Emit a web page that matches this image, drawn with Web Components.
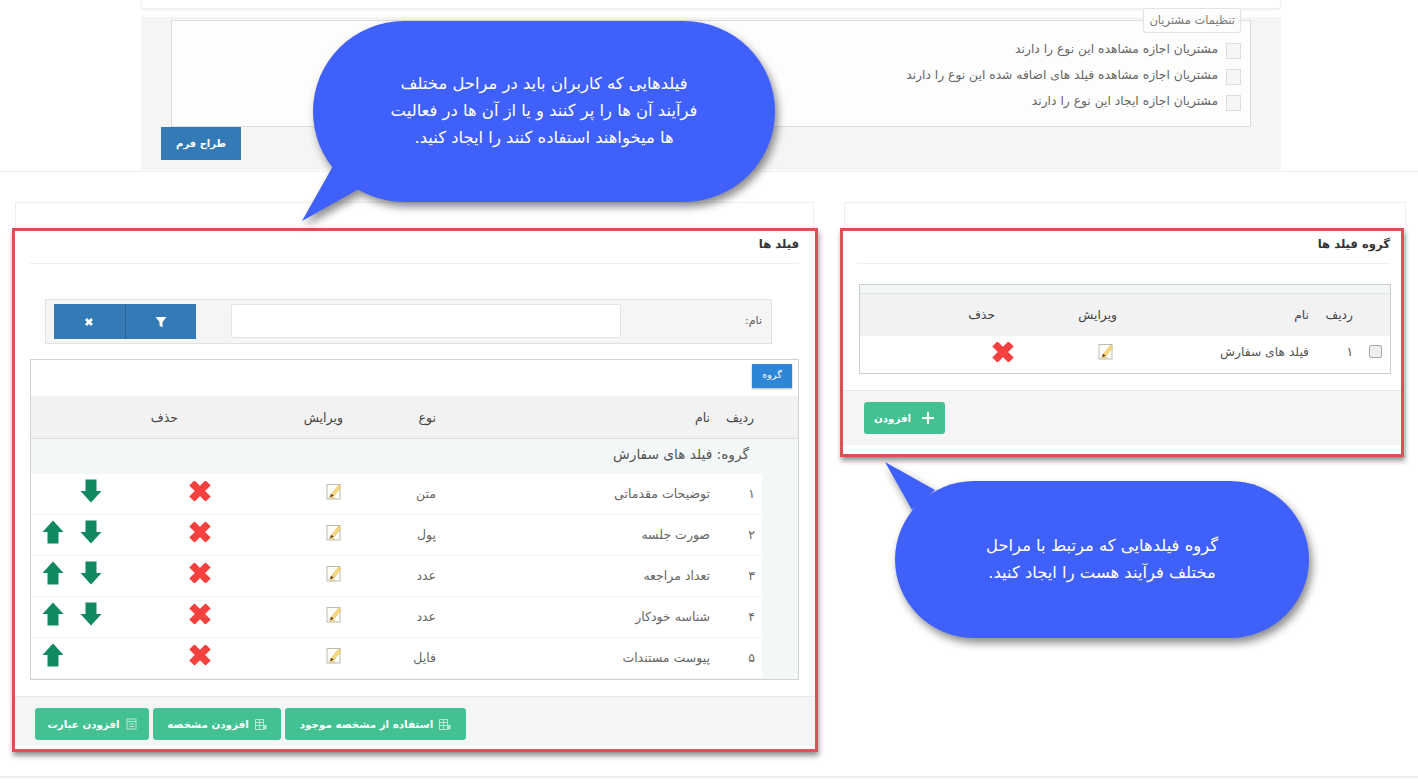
<!DOCTYPE html>
<html lang="fa" dir="rtl">
<head>
<meta charset="utf-8">
<title>فیلد ها</title>
<style>
  html, body { margin: 0; padding: 0; background: #fff; }
  body { font-family: "DejaVu Sans", sans-serif; font-size: 12px; color: #555; }
</style>
</head>
<body>

<app-page></app-page>

<script>
// Iconos dibujados a mano
const ICONS = {
  edit: `<svg width="16" height="17" viewBox="0 0 16 17"><rect x="1" y="1.5" width="13" height="14.5" fill="#fffef8" stroke="#bcbcb0"/><path d="M6 10.5 12.6 2.2 14.8 4 8.2 12.4 5 13.6Z" fill="#f8dc84" stroke="#e2b144" stroke-width=".7"/><path d="M3.8 14.2 5 10.8 8 12.8Z" fill="#6a4a1e"/><path d="M3 14.8h6" stroke="#e0b95c"/></svg>`,
  del: `<svg width="22" height="20" viewBox="0 0 22 20"><path d="M5.5 4.5 16.5 15.5M16.5 4.5 5.5 15.5" stroke="#f5413e" stroke-width="7.4" stroke-linecap="square" fill="none"/></svg>`,
  down: `<svg width="22" height="24" viewBox="0 0 22 24"><path d="M5.5 .5h11V12h5L11 23.5.5 12h5Z" fill="#10895f"/></svg>`,
  up: `<svg width="22" height="24" viewBox="0 0 22 24"><path d="M5.5 23.5h11V12h5L11 .5.5 12h5Z" fill="#10895f"/></svg>`,
  plus: `<svg width="14" height="14" viewBox="0 0 14 14"><path d="M7 1v12M1 7h12" stroke="#fff" stroke-width="2"/></svg>`,
  filter: `<svg width="12" height="12" viewBox="0 0 12 12"><path d="M.5 1h11L7.5 6v5.5L4.5 9.5V6Z" fill="#fff"/></svg>`,
  close: `<svg width="10" height="10" viewBox="0 0 10 10"><path d="M2 2l6 6M8 2 2 8" stroke="#fff" stroke-width="2.8"/></svg>`,
  table: `<svg width="12" height="11" viewBox="0 0 12 11"><path d="M.5.5h8v10h-8ZM.5 3.5h8M.5 6.5h8M4.5.5v10" fill="none" stroke="#b9e8d5"/><path d="M8.5 6h3v4.5h-3Z" fill="#b9e8d5"/></svg>`,
  note: `<svg width="11" height="12" viewBox="0 0 11 12"><path d="M1 1h9v10H1ZM1 3.5h9M3 6h5M3 8.5h5" fill="none" stroke="#b9e8d5"/></svg>`
};

class UiIcon extends HTMLElement {
  connectedCallback() {
    this.attachShadow({ mode: "open" });
    this.shadowRoot.innerHTML = `
      <style>:host { display: inline-flex; line-height: 0; }</style>
      ${ICONS[this.getAttribute("name")] || ""}`;
  }
}
customElements.define("ui-icon", UiIcon);

class SpeechBubble extends HTMLElement {
  connectedCallback() {
    const [x, y, w, h] = this.getAttribute("box").split(",").map(Number);
    const r = Math.round(h / 2);
    this.attachShadow({ mode: "open" });
    this.shadowRoot.innerHTML = `
      <style>
        :host { position: absolute; left: ${x}px; top: ${y}px; width: ${w}px; height: ${h}px;
                display: flex; align-items: center; justify-content: center; z-index: 5;
                color: #fff; font-size: 16.4px; line-height: 27px; text-align: center; white-space: nowrap; }
        svg { position: absolute; inset: 0; overflow: visible; filter: drop-shadow(3px 5px 4px rgba(0,0,0,.45)); }
        div { position: relative; padding-bottom: 2px; }
      </style>
      <svg width="${w}" height="${h}">
        <rect width="${w}" height="${h}" rx="${r}" fill="#4060fb"/>
        <polygon points="${this.getAttribute("tail")}" fill="#4060fb"/>
      </svg>
      <div><slot></slot></div>`;
  }
}
customElements.define("speech-bubble", SpeechBubble);

class GreenButton extends HTMLElement {
  connectedCallback() {
    this.attachShadow({ mode: "open" });
    this.shadowRoot.innerHTML = `
      <style>
        :host { display: inline-flex; align-items: center; justify-content: center; gap: 6px; box-sizing: border-box;
                height: 32px; background: #43c193; border-radius: 3px; color: #fff; font-size: 10.3px; font-weight: bold; white-space: nowrap; }
      </style>
      <ui-icon name="${this.getAttribute("icon")}"></ui-icon>
      <slot></slot>`;
  }
}
customElements.define("green-button", GreenButton);

class CustomerSettings extends HTMLElement {
  connectedCallback() {
    const opts = [
      "مشتریان اجازه مشاهده این نوع را دارند",
      "مشتریان اجازه مشاهده فیلد های اضافه شده این نوع را دارند",
      "مشتریان اجازه ایجاد این نوع را دارند"
    ];
    this.attachShadow({ mode: "open" });
    this.shadowRoot.innerHTML = `
      <style>
        :host { display: block; padding: 0 137px 0 141px; }
        .strip { height: 9px; margin-bottom: 8px; background: #fff; border: 1px solid #f0f0f0; border-top: 0; box-sizing: border-box; border-radius: 0 0 3px 3px; box-shadow: 0 1px 2px rgba(0,0,0,.08); }
        .panel { height: 153px; background: #f5f5f5; display: flex; flex-direction: column; }
        fieldset { box-sizing: border-box; height: 119px; margin: -9px 30px 0; padding: 0; background: #fdfdfd; border: 1px solid #ddd; min-width: 0; }
        legend { box-sizing: border-box; height: 25px; margin-right: 9px; padding: 0 5px; line-height: 22px; background: #fdfdfd; border: 1px solid #e2e2e2; border-radius: 3px; font-size: 11.5px; color: #777; }
        .opts { padding-top: 10px; display: flex; flex-direction: column; gap: 10px; }
        .opt { display: flex; align-items: center; gap: 8px; height: 16px; padding-right: 9px; font-size: 12.3px; color: #666; }
        .opt span + span { padding-bottom: 4px; }
        .cb { width: 15px; height: 16px; box-sizing: border-box; background: #f6f6f6; border: 1px solid #ddd; flex: none; }
        button { align-self: flex-end; width: 80px; height: 33px; margin: 0 0 0 20px; padding: 0; border: 0; background: #337ab7; color: #fff; font: bold 10px "DejaVu Sans", sans-serif; }
      </style>
      <div class="strip"></div>
      <div class="panel">
        <fieldset>
          <legend>تنظیمات مشتریان</legend>
          <div class="opts">${opts.map(t => `<div class="opt"><span class="cb"></span><span>${t}</span></div>`).join("")}</div>
        </fieldset>
        <button>طراح فرم</button>
      </div>`;
  }
}
customElements.define("customer-settings", CustomerSettings);

// Tarjeta con el marco rojo, titulo y pie
class FramedCard extends HTMLElement {
  connectedCallback() {
    this.attachShadow({ mode: "open" });
    this.shadowRoot.innerHTML = `
      <style>
        :host { display: block; box-sizing: border-box; background: #fff; border: 1px solid #eee; padding-top: 25px; }
        .frame { box-sizing: border-box; margin: var(--frame-margin); background: #fff; border: 3px solid #db5156; box-shadow: 1px 4px 5px rgba(0,0,0,.4); padding-bottom: var(--frame-bottom); }
        .body { padding: var(--body-pad); }
        h3 { margin: 0; height: 32px; box-sizing: content-box; border-bottom: 1px solid #eee; font-size: 11.6px; line-height: 27px; font-weight: bold; color: #333; }
        .foot { box-sizing: border-box; height: var(--foot-h); margin-top: 16px; background: #f5f5f5; border-top: 1px solid #e8e8e8; padding: var(--foot-pad); display: flex; justify-content: flex-end; }
      </style>
      <div class="frame">
        <div class="body"><h3>${this.getAttribute("heading")}</h3><slot></slot></div>
        <div class="foot"><slot name="foot"></slot></div>
      </div>`;
  }
}
customElements.define("framed-card", FramedCard);

class GroupsTable extends HTMLElement {
  connectedCallback() {
    this.attachShadow({ mode: "open" });
    this.shadowRoot.innerHTML = `
      <style>
        :host { display: block; margin: 20px -1px 0 2px; height: 90px; box-sizing: border-box; border: 1px solid #c9cfcf; font-size: 12.3px; color: #555; }
        .top { height: 8px; background: #f3f6f6; border-bottom: 1px solid #dfe5e5; }
        .row { display: grid; grid-template-columns: 30px 40px 190px 110px 1fr; align-items: center; }
        .head { height: 42px; background: #f2f2f2; color: #444; }
        .body { height: 37px; box-sizing: border-box; padding-bottom: 6px; }
        .n { padding-right: 7px; }
        .t { padding-right: 11px; }
        .e { padding-right: 13px; }
        .d { padding-right: 25px; }
        .cb { justify-self: center; width: 13px; height: 13px; box-sizing: border-box; background: #eee; border: 1px solid #aaa; border-radius: 2px; }
        .ei { padding-right: 16px; display: flex; }
        .di { padding-right: 6px; display: flex; }
      </style>
      <div class="top"></div>
      <div class="row head"><span></span><span class="n">ردیف</span><span class="t">نام</span><span class="e">ویرایش</span><span class="d">حذف</span></div>
      <div class="row body"><span class="cb"></span><span class="n">۱</span><span class="t">فیلد های سفارش</span><span class="ei"><ui-icon name="edit"></ui-icon></span><span class="di"><ui-icon name="del"></ui-icon></span></div>`;
  }
}
customElements.define("groups-table", GroupsTable);

class FilterBar extends HTMLElement {
  connectedCallback() {
    this.attachShadow({ mode: "open" });
    this.shadowRoot.innerHTML = `
      <style>
        :host { display: grid; grid-template-columns: 141px 390px 177px; box-sizing: border-box; height: 45px; margin: 35px 27px 15px 15px; padding: 4px 9px 0 8px; background: #f5f5f5; border: 1px solid #e2e2e2; align-items: start; font-size: 11px; }
        label { line-height: 34px; color: #555; }
        .inp { height: 34px; box-sizing: border-box; background: #fff; border: 1px solid #e3e3e3; border-radius: 2px; }
        .btns { display: flex; height: 35px; margin-right: 35px; }
        .btns span { flex: 1; display: flex; align-items: center; justify-content: center; background: #337ab7; }
        .btns span + span { border-right: 1px solid #2a6496; }
      </style>
      <label>نام:</label>
      <div class="inp"></div>
      <div class="btns"><span><ui-icon name="filter"></ui-icon></span><span><ui-icon name="close"></ui-icon></span></div>`;
  }
}
customElements.define("filter-bar", FilterBar);

class FieldRow extends HTMLElement {
  connectedCallback() {
    const a = n => this.getAttribute(n);
    this.attachShadow({ mode: "open" });
    this.shadowRoot.innerHTML = `
      <style>
        :host { display: grid; grid-template-columns: 42px 274px 82px 60px 193px 40px 36px 4px; height: 41px; box-sizing: border-box; align-items: center; background: #fff; border-bottom: 1px solid #f4f4f4; margin-right: 36px; font-size: 12.5px; color: #666; }
        .n { padding: 0 7px 2px 0; }
        .t { padding: 0 10px 2px 0; }
        .c { display: flex; justify-content: center; padding-bottom: 6px; }
        .d { padding-right: 15px; }
      </style>
      <span class="n">${a("num")}</span>
      <span class="t">${a("label")}</span>
      <span class="t">${a("kind")}</span>
      <span class="c"><ui-icon name="edit"></ui-icon></span>
      <span class="c d"><ui-icon name="del"></ui-icon></span>
      <span class="c">${this.hasAttribute("down") ? '<ui-icon name="down"></ui-icon>' : ""}</span>
      <span class="c">${this.hasAttribute("up") ? '<ui-icon name="up"></ui-icon>' : ""}</span>`;
  }
}
customElements.define("field-row", FieldRow);

class FieldsTable extends HTMLElement {
  connectedCallback() {
    this.attachShadow({ mode: "open" });
    this.shadowRoot.innerHTML = `
      <style>
        :host { display: block; box-sizing: border-box; height: 321px; border: 1px solid #cfd3d3; background: #f3f7f7; font-size: 12.5px; }
        .bar { height: 36px; background: #fff; padding: 4px 6px 0; box-sizing: border-box; }
        .bar span { display: block; width: 40px; height: 24px; background: #2f86d8; color: #fff; font-size: 9.5px; line-height: 22px; text-align: center; box-shadow: 0 1px 2px rgba(0,0,0,.3); }
        .head { display: grid; grid-template-columns: 42px 274px 82px 60px 193px 1fr; height: 43px; box-sizing: border-box; align-items: center; background: #f2f2f2; border-bottom: 1px solid #ddd; padding-right: 36px; color: #444; white-space: nowrap; }
        .group { height: 35px; line-height: 30px; padding-right: 49px; font-size: 13.7px; color: #555; }
      </style>
      <div class="bar"><span>گروه</span></div>
      <div class="head">
        <span style="padding-right:8px">ردیف</span>
        <span style="padding-right:10px">نام</span>
        <span style="padding-right:10px">نوع</span>
        <span style="padding-right:21px">ویرایش</span>
        <span style="padding-right:126px">حذف</span>
      </div>
      <div class="group">گروه: فیلد های سفارش</div>
      <slot></slot>`;
  }
}
customElements.define("fields-table", FieldsTable);

class AppPage extends HTMLElement {
  connectedCallback() {
    this.attachShadow({ mode: "open" });
    this.shadowRoot.innerHTML = `
      <style>
        :host { display: flex; flex-direction: column; position: relative; height: 783px; overflow: hidden; background: #fff; }
        .cols { margin-top: 1px; border-top: 1px solid #eee; padding: 30px 12px 0 0; display: flex; gap: 30px; align-items: flex-start; justify-content: flex-start; }
        .groups { width: 562px; --frame-margin: 0 1px 0 -5px; --frame-bottom: 9px; --body-pad: 0 11px 0 14px; --foot-h: 55px; --foot-pad: 11px 0 11px 21px; }
        .fields { width: 799px; --frame-margin: 0 -5px 0 -4px; --frame-bottom: 3px; --body-pad: 0 16px 0 15px; --foot-h: 50px; --foot-pad: 11px 0 0 20px; }
        .add { width: 81px; gap: 10px; }
        .foot { display: flex; gap: 4px; }
        .b1 { width: 181px; }
        .b2 { width: 128px; }
        .b3 { width: 114px; }
        .end { margin-top: auto; height: 5px; border-top: 2px solid #eee; background: #fff; }
      </style>
      <customer-settings></customer-settings>
      <div class="cols">
        <framed-card class="groups" heading="گروه فیلد ها">
          <groups-table></groups-table>
          <green-button slot="foot" class="add" icon="plus">افزودن</green-button>
        </framed-card>
        <framed-card class="fields" heading="فیلد ها">
          <filter-bar></filter-bar>
          <fields-table>
            <field-row num="۱" label="توضیحات مقدماتی" kind="متن" down></field-row>
            <field-row num="۲" label="صورت جلسه" kind="پول" up down></field-row>
            <field-row num="۳" label="تعداد مراجعه" kind="عدد" up down></field-row>
            <field-row num="۴" label="شناسه خودکار" kind="عدد" up down></field-row>
            <field-row num="۵" label="پیوست مستندات" kind="فایل" up></field-row>
          </fields-table>
          <div slot="foot" class="foot">
            <green-button class="b1" icon="table">استفاده از مشخصه موجود</green-button>
            <green-button class="b2" icon="table">افزودن مشخصه</green-button>
            <green-button class="b3" icon="note">افزودن عبارت</green-button>
          </div>
        </framed-card>
      </div>
      <div class="end"></div>
      <speech-bubble box="313,21,462,181" tail="20,145 -11,200 46,168">فیلدهایی که کاربران باید در مراحل مختلف<br>فرآیند آن ها را پر کنند و یا از آن ها در فعالیت<br>ها میخواهند استفاده کنند را ایجاد کنید.</speech-bubble>
      <speech-bubble box="895,481,414,157" tail="17,29 -10,-19 40,9">گروه فیلدهایی که مرتبط با مراحل<br>مختلف فرآیند هست را ایجاد کنید.</speech-bubble>`;
  }
}
customElements.define("app-page", AppPage);
</script>
</body>
</html>
